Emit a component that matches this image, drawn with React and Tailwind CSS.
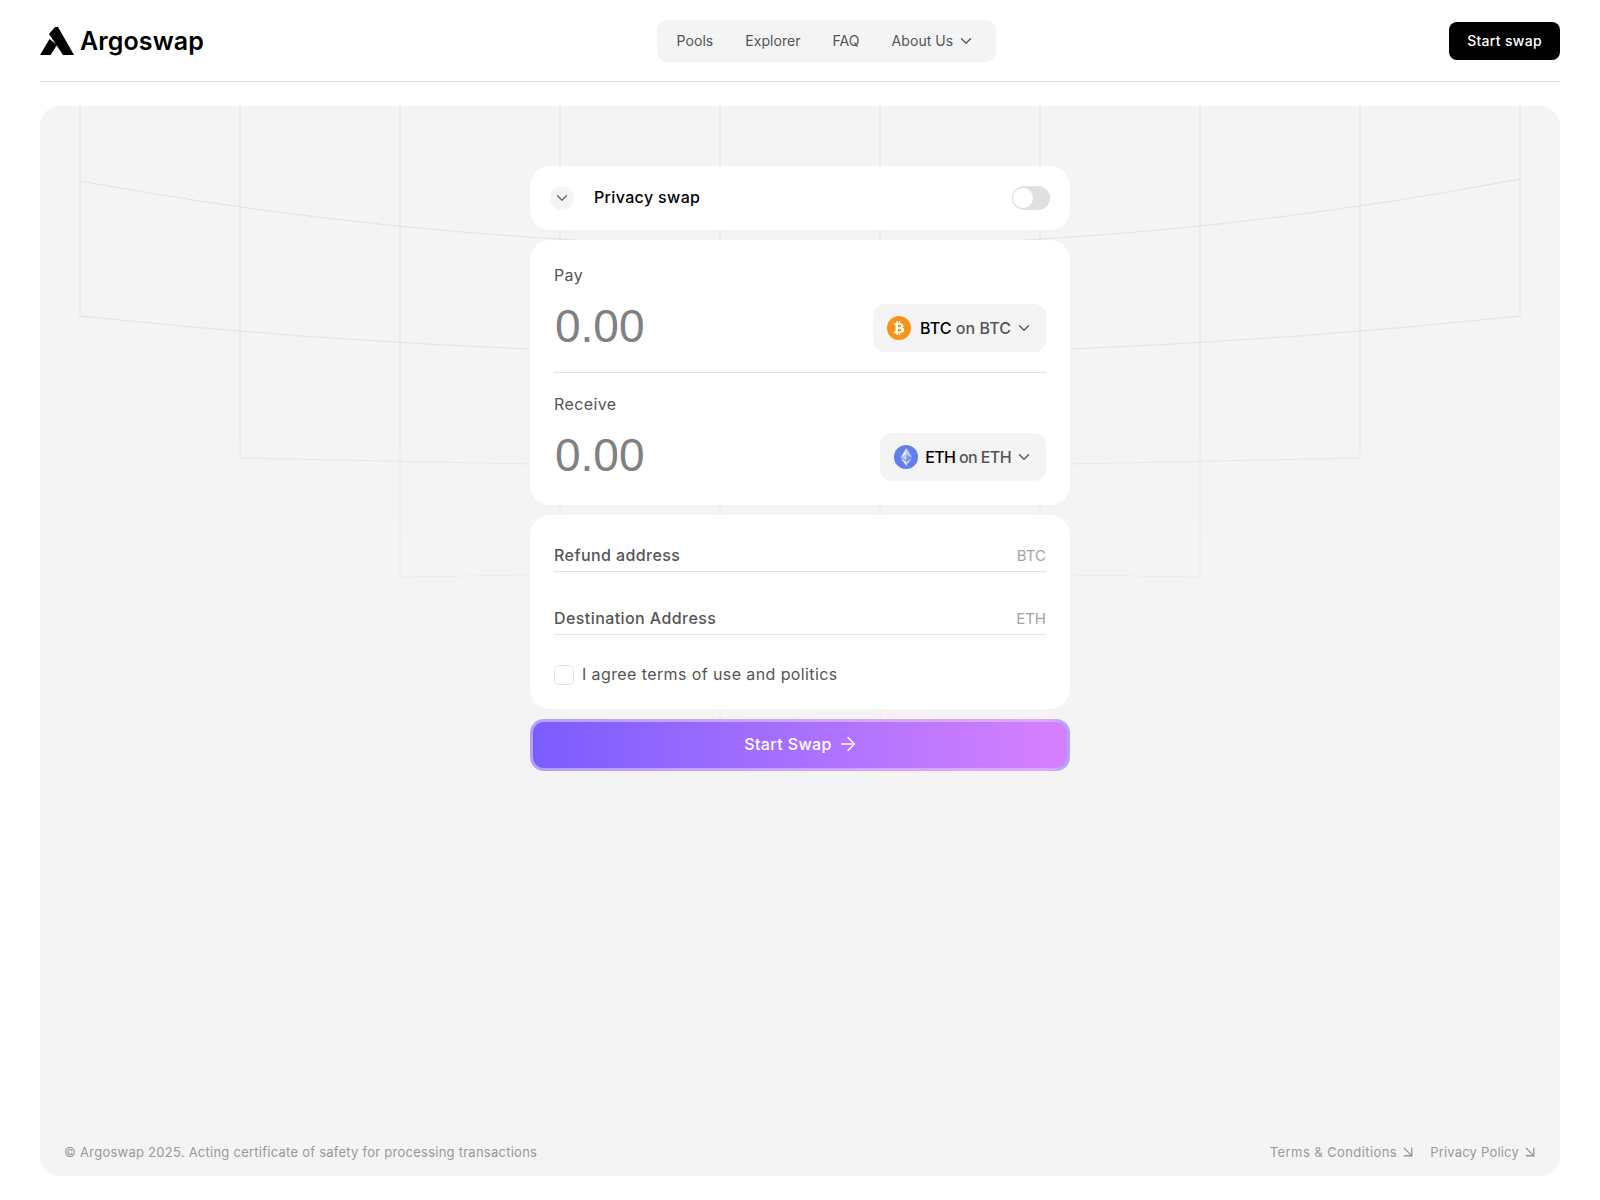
import { ChevronDown, ArrowRight, ArrowDownRight } from "lucide-react";
import { FaBtc } from "react-icons/fa";

function Logo() {
  return (
    <svg width="34" height="28" viewBox="0 0 34 28" fill="#000">
      <path d="M15 0 L18 0 L34 28 L23 28 L9 7 Z" />
      <path d="M0 28 L9.5 12 L17 18 L10.5 28 Z" />
    </svg>
  );
}

function BackgroundGrid() {
  const columns = [
    [80, 316],
    [240, 458],
    [400, 577],
    [560, 600],
    [720, 730],
    [880, 730],
    [1040, 600],
    [1200, 577],
    [1360, 458],
    [1520, 316],
  ];
  return (
    <svg className="absolute left-[-40px] top-[-106px]" width="1600" height="740" fill="none">
      <defs>
        <linearGradient id="fade" x1="0" y1="106" x2="0" y2="600" gradientUnits="userSpaceOnUse">
          <stop offset="0" stopColor="#e4e4e4" />
          <stop offset="1" stopColor="#ededed" />
        </linearGradient>
      </defs>
      {columns.map(([x, end]) => (
        <line key={x} x1={x} y1="106" x2={x} y2={end} stroke="url(#fade)" strokeWidth="1.3" />
      ))}
      <path d="M80 181 Q 327 226 575 240" stroke="#e2e2e2" />
      <path d="M1520 179 Q 1273 226 1025 240" stroke="#e2e2e2" />
      <path d="M80 316 Q 305 340 530 349" stroke="#e4e4e4" />
      <path d="M1520 316 Q 1295 340 1070 349" stroke="#e4e4e4" />
      <path d="M240 458 L530 464" stroke="#e8e8e8" />
      <path d="M1360 458 L1070 464" stroke="#e8e8e8" />
      <path d="M400 577 L530 575" stroke="#ececec" />
      <path d="M1200 577 L1070 575" stroke="#ececec" />
    </svg>
  );
}

function TokenChip({ icon, symbol, network, className }) {
  return (
    <button className="flex h-12 items-center rounded-xl bg-[#f4f4f4] pl-3.5 pr-[13px] text-base font-medium">
      {icon}
      <span className={"text-[#555] " + className}>
        <span className="text-black">{symbol}</span> on {network}
      </span>
      <ChevronDown size={18} strokeWidth={1.75} className="ml-1 text-[#555]" />
    </button>
  );
}

function BtcIcon() {
  return (
    <span className="flex h-6 w-6 items-center justify-center rounded-full bg-[#f7931a] text-white">
      <FaBtc size={14} />
    </span>
  );
}

function EthIcon() {
  return (
    <svg width="24" height="24" viewBox="0 0 32 32">
      <circle cx="16" cy="16" r="16" fill="#627eea" />
      <g fill="#fff">
        <path fillOpacity=".6" d="M16.5 4v8.87l7.5 3.35z" />
        <path fillOpacity=".85" d="M16.5 4L9 16.22l7.5-3.35z" />
        <path fillOpacity=".6" d="M16.5 21.97V28L24 17.62z" />
        <path fillOpacity=".85" d="M16.5 28v-6.03L9 17.62z" />
        <path fillOpacity=".2" d="M16.5 20.57l7.5-4.35-7.5-3.35z" />
        <path fillOpacity=".6" d="M9 16.22l7.5 4.35v-7.7z" />
      </g>
    </svg>
  );
}

function AmountRow({ label, chip }) {
  return (
    <div>
      <div className="h-6 text-base leading-[22px] tracking-[0.4px] text-[#555]">{label}</div>
      <div className="mt-4 flex h-12 items-center justify-between">
        <span className="pb-1 pl-px font-['Liberation_Sans',sans-serif] text-[46px] leading-none text-[#808080]">0.00</span>
        {chip}
      </div>
    </div>
  );
}

function AddressRow({ label, unit }) {
  return (
    <div className="flex h-[33px] items-center justify-between border-b border-[#e2e2e2]">
      <span className="text-base font-medium tracking-[0.42px] text-[#555]">{label}</span>
      <span className="pt-[3px] text-[15px] text-[#a3a3a3]">{unit}</span>
    </div>
  );
}

export default function App() {
  return (
    <div className="flex min-h-[1200px] flex-col bg-white px-10 pb-6 font-['Inter',sans-serif]">
      <header className="flex h-[82px] items-center justify-between border-b border-[#e2e2e2] pt-px">
        <div className="flex items-center gap-[6px]">
          <Logo />
          <span className="pt-0.5 text-[25px] font-semibold tracking-[0.1px] text-black">Argoswap</span>
        </div>
        <nav className="flex h-[42px] items-center gap-8 rounded-[10px] bg-[#f4f4f4] pl-5 pr-[21px] text-sm tracking-[0.05px] text-[#555]">
          <a>Pools</a>
          <a>Explorer</a>
          <a>FAQ</a>
          <a className="flex items-center gap-1">
            About Us <ChevronDown size={18} strokeWidth={1.75} />
          </a>
        </nav>
        <button className="h-[38px] w-[111px] rounded-lg bg-black text-sm font-medium tracking-[0.3px] text-white">Start swap</button>
      </header>

      <main className="relative mt-6 flex flex-1 flex-col overflow-hidden rounded-[20px] bg-[#f4f4f4]">
        <BackgroundGrid />

        <div className="relative mx-auto mt-[60px] flex w-[540px] flex-col gap-2.5">
          <section className="flex h-16 items-center justify-between rounded-[20px] bg-white px-5">
            <div className="flex items-center gap-5">
              <span className="flex h-6 w-6 items-center justify-center rounded-full bg-[#f4f4f4] text-[#666]">
                <ChevronDown size={18} strokeWidth={1.75} />
              </span>
              <span className="pb-0.5 text-base font-medium tracking-[0.35px] text-black">Privacy swap</span>
            </div>
            <span className="flex h-6 w-[38px] items-center rounded-full bg-[#e0e0e0] pl-[1px]">
              <span className="h-5 w-5 rounded-full bg-white" />
            </span>
          </section>

          <section className="rounded-[20px] bg-white p-6">
            <div className="border-b border-[#e2e2e2] pb-5">
              <AmountRow
                label="Pay"
                chip={<TokenChip icon={<BtcIcon />} symbol="BTC" network="BTC" className="ml-[9px] tracking-[0.05px]" />}
              />
            </div>
            <div className="pt-5">
              <AmountRow
                label="Receive"
                chip={<TokenChip icon={<EthIcon />} symbol="ETH" network="ETH" className="ml-[7px] tracking-[-0.6px]" />}
              />
            </div>
          </section>

          <section className="flex flex-col gap-[30px] rounded-[20px] bg-white p-6">
            <AddressRow label="Refund address" unit="BTC" />
            <AddressRow label="Destination Address" unit="ETH" />
            <label className="flex h-5 items-center gap-2 text-base tracking-[0.4px] text-[#555]">
              <span className="h-5 w-5 rounded-[5px] border border-[#e2e6ec] bg-white" />
              <span className="pb-0.5">I agree terms of use and politics</span>
            </label>
          </section>

          <button className="h-[52px] rounded-[14px] bg-gradient-to-r from-[#b4a0ff] via-[#e2a8ff] via-[95%] to-[#a9a5ff] p-[3px]">
            <span className="flex h-full items-center justify-center gap-[5px] rounded-[11px] bg-gradient-to-r from-[#7c5cff] to-[#d780ff] pb-0.5 pl-[3px] text-base font-medium tracking-[0.4px] text-white">
              Start Swap <ArrowRight size={22} strokeWidth={1.6} />
            </span>
          </button>
        </div>

        <footer className="relative mt-auto flex items-center justify-between pb-[14px] pl-6 pr-[21px] text-[13px] tracking-[0.25px] text-[#999]">
          <span>© Argoswap 2025. Acting certificate of safety for processing transactions</span>
          <div className="flex items-center gap-[13px]">
            <a className="flex items-center gap-0.5 tracking-[0.42px]">
              Terms & Conditions <ArrowDownRight size={18} strokeWidth={1.75} />
            </a>
            <a className="flex items-center gap-0.5 tracking-[0.2px]">
              Privacy Policy <ArrowDownRight size={18} strokeWidth={1.75} />
            </a>
          </div>
        </footer>
      </main>
    </div>
  );
}
